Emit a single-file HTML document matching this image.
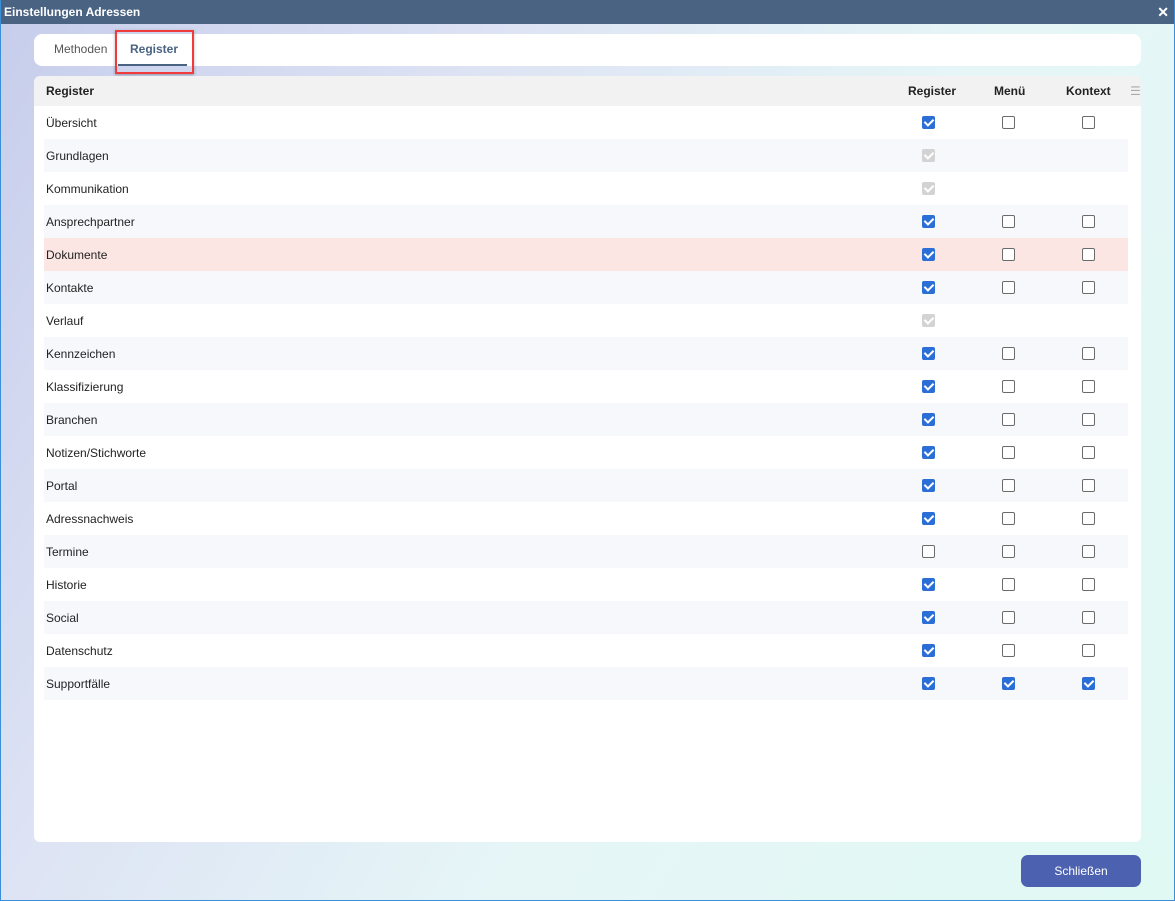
<!DOCTYPE html>
<html><head><meta charset="utf-8"><style>
*{box-sizing:border-box;margin:0;padding:0}
body{width:1175px;height:901px;overflow:hidden;font-family:"Liberation Sans",Arial,sans-serif;font-size:12px;color:#222;position:relative;
background:linear-gradient(120deg,#c6cdeb 0%,#dde3f4 30%,#e6f6f7 60%,#e0f9f3 100%);}
.frame{position:absolute;inset:0;border:1px solid #3a8fd8;border-top:none}
.title{position:absolute;left:0;top:0;width:1175px;height:24px;background:#4a6382;color:#fff;font-weight:bold;font-size:12px;line-height:24px;padding-left:4px}
.x{position:absolute;right:6px;top:0;color:#fff;font-size:14px;font-weight:bold}
.tabs{position:absolute;left:34px;top:34px;width:1107px;height:32px;background:#fff;border-radius:8px}
.tab{position:absolute;top:8px;font-size:12px;color:#555}
.ul{position:absolute;left:84px;top:30px;width:69px;height:2px;background:#4a6382}
.hl{position:absolute;left:115px;top:30px;width:79px;height:44px;border:2px solid #ef3b3b;box-shadow:0 1px 3px rgba(0,0,0,.3)}
.panel{position:absolute;left:34px;top:76px;width:1107px;height:766px;background:#fff;border-radius:6px;overflow:hidden}
.hdr{height:30px;background:#f2f2f2;position:relative;font-weight:bold;line-height:30px}
.hdr span{position:absolute}
.row{position:absolute;left:10px;width:1084px;height:33px;line-height:35px;padding-left:2px}
.cb{position:absolute;top:10px;width:13px;height:13px;border:1px solid #6b6b6b;border-radius:2px;background:#fff}
.cb.on{background:#2b6fd6;border-color:#2b6fd6}
.cb.dis{background:#d3d3d3;border-color:#d3d3d3}
.cb.on::after,.cb.dis::after{content:"";position:absolute;left:3px;top:0px;width:4px;height:7px;border:solid #fff;border-width:0 2px 2px 0;transform:rotate(45deg)}
.btn{position:absolute;left:1021px;top:855px;width:120px;height:32px;background:#4c62b0;border-radius:7px;color:#fff;text-align:center;line-height:32px;font-size:12px}
</style></head><body>
<div class="title">Einstellungen Adressen<span class="x">✕</span></div>
<div class="frame"></div>
<div class="tabs"><span class="tab" style="left:20px">Methoden</span><span class="tab" style="left:96px;color:#4a6382;font-weight:bold">Register</span><div class="ul" style="left:84px"></div></div>
<div class="hl"></div>
<div class="panel">
<div class="hdr"><span style="left:12px">Register</span><span style="left:874px">Register</span><span style="left:960px">Menü</span><span style="left:1032px">Kontext</span><span style="left:1096px;color:#aaa;font-weight:normal">☰</span></div>
<div id="rows"></div>
</div>
<div class="btn">Schließen</div>
<script>
var d=[["Übersicht","1","0","0"],["Grundlagen","d"],["Kommunikation","d"],["Ansprechpartner","1","0","0"],["Dokumente","1","0","0"],["Kontakte","1","0","0"],["Verlauf","d"],["Kennzeichen","1","0","0"],["Klassifizierung","1","0","0"],["Branchen","1","0","0"],["Notizen/Stichworte","1","0","0"],["Portal","1","0","0"],["Adressnachweis","1","0","0"],["Termine","0","0","0"],["Historie","1","0","0"],["Social","1","0","0"],["Datenschutz","1","0","0"],["Supportfälle","1","1","1"]];
var h="";d.forEach(function(r,i){var bg=i==4?"#fbe6e4":(i%2?"#f7f8fc":"#fff");h+='<div class="row" style="top:'+(30+33*i)+'px;background:'+bg+'">'+r[0];
var xs=[878,958,1038];for(var j=1;j<r.length;j++){var c=r[j]=="1"?"on":r[j]=="d"?"dis":"";h+='<span class="cb '+c+'" style="left:'+xs[j-1]+'px"></span>'}h+='</div>'});
document.getElementById("rows").innerHTML=h;
</script>
</body></html>
